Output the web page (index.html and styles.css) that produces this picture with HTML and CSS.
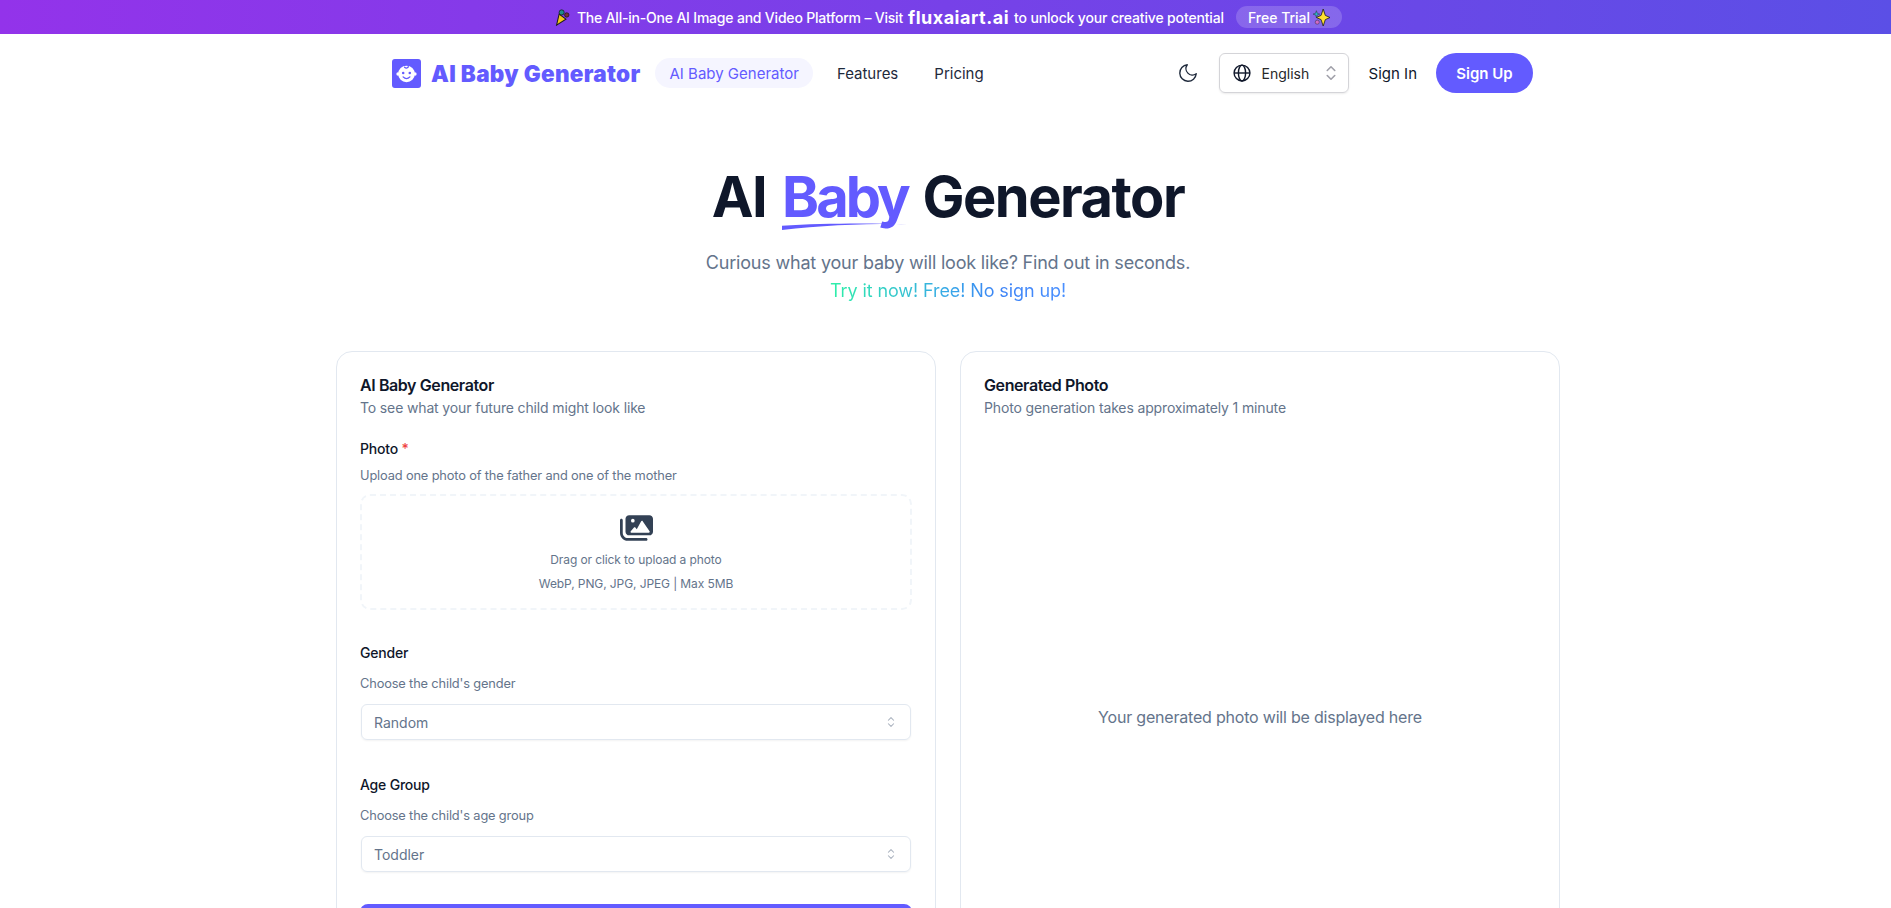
FILE: index.html
```html
<!DOCTYPE html>
<html lang="en">
<head>
<meta charset="utf-8">
<title>AI Baby Generator</title>
<link rel="stylesheet" href="styles.css">
</head>
<body>
<div class="banner">
  <svg class="party" viewBox="0 0 20 20" width="17" height="17"><path d="M6 6 L14 12 L3 19 Z" fill="#f5c518" stroke="#1a1a1a" stroke-width="1.2"/><circle cx="9" cy="4" r="3" fill="#1f8a8c" stroke="#111" stroke-width=".8"/><circle cx="15" cy="7" r="2.6" fill="#7a2f3a" stroke="#111" stroke-width=".8"/></svg>
  <span class="banner-a">The All-in-One AI Image and Video Platform – Visit</span>
  <a class="banner-link">fluxaiart.ai</a>
  <span class="banner-b">to unlock your creative potential</span>
  <span class="trial">Free Trial
    <svg viewBox="0 0 20 20" width="17" height="17"><path d="M12 0 L14.500 7.500 L20 10 L14.500 12.500 L12 20 L9.500 12.500 L4 10 L9.500 7.500 Z" fill="#ffe02e" stroke="#222" stroke-width="1"/><path d="M4 2 L5 5 L8 6 L5 7 L4 10 L3 7 L0 6 L3 5 Z" fill="#2cb6c8" stroke="#222" stroke-width=".5"/><circle cx="5" cy="15.500" r="2.400" fill="#d36bc6" stroke="#222" stroke-width=".5"/></svg>
  </span>
</div>

<header class="nav">
  <a class="logo">
    <svg class="logo-icon" viewBox="0 0 30 30" width="29" height="29">
      <rect width="30" height="30" rx="3" fill="#635bff"/>
      <circle cx="15" cy="15.500" r="8.600" fill="#fff"/>
      <circle cx="6.200" cy="15.500" r="1.700" fill="#fff"/><circle cx="23.800" cy="15.500" r="1.700" fill="#fff"/>
      <circle cx="11.600" cy="14.500" r="1.300" fill="#635bff"/><circle cx="18.400" cy="14.500" r="1.300" fill="#635bff"/>
      <path d="M11.500 18.500 Q15 22 18.500 18.500" fill="none" stroke="#635bff" stroke-width="1.400" stroke-linecap="round"/>
      <path d="M13 8.500 Q15 10.500 17 8" fill="none" stroke="#635bff" stroke-width="1.300" stroke-linecap="round"/>
    </svg>
    <span class="logo-text">AI Baby Generator</span>
  </a>
  <nav class="links">
    <a class="link active">AI Baby Generator</a>
    <a class="link">Features</a>
    <a class="link">Pricing</a>
  </nav>
  <div class="actions">
    <svg class="moon" viewBox="0 0 24 24" width="22" height="22"><path d="M21 12.800A9 9 0 1 1 11.200 3a7 7 0 0 0 9.800 9.800z" fill="none" stroke="#1e293b" stroke-width="1.500" stroke-linecap="round" stroke-linejoin="round"/></svg>
    <div class="lang">
      <svg viewBox="0 0 24 24" width="20" height="20" fill="none" stroke="#0f172a" stroke-width="1.700"><circle cx="12" cy="12" r="9.500"/><ellipse cx="12" cy="12" rx="4.300" ry="9.500"/><path d="M2.500 12h19"/></svg>
      <span class="lang-text">English</span>
      <svg class="updown" viewBox="0 0 16 16" width="20" height="20" fill="none" stroke="#a1a1aa" stroke-width="1.300" stroke-linecap="round" stroke-linejoin="round"><path d="M5 6l3-3 3 3M5 10l3 3 3-3"/></svg>
    </div>
    <a class="signin">Sign In</a>
    <a class="signup">Sign Up</a>
  </div>
</header>

<section class="hero">
  <h1 class="title">AI <span class="baby">Baby<svg class="swoosh" viewBox="0 0 126 9" preserveAspectRatio="none"><path d="M0 3.500 C40 0 90 0 126 1.500 C85 1 40 3 0 9 Z" fill="#635bff"/></svg></span> Generator</h1>
  <p class="sub">Curious what your baby will look like? Find out in seconds.</p>
  <p class="try"><span class="try-text">Try it now! Free! No sign up!</span></p>
</section>

<main class="cards">
  <section class="card">
    <h2 class="card-title">AI Baby Generator</h2>
    <p class="card-sub">To see what your future child might look like</p>

    <div class="label first">Photo <span class="req">*</span></div>
    <p class="help help-photo">Upload one photo of the father and one of the mother</p>
    <div class="drop">
      <svg class="drop-icon" viewBox="0 0 576 512" width="33" height="30"><path fill="#334155" d="M160 32c-35.300 0-64 28.700-64 64v224c0 35.300 28.700 64 64 64h352c35.300 0 64-28.700 64-64V96c0-35.300-28.700-64-64-64H160zm236 106.700l120 176c3.300 4.900 3.700 11.200.900 16.500S508 339 502 339H200c-6.200 0-11.800-3.500-14.400-9.100s-1.800-12.200 2.200-16.900l56-64c3-3.500 7.400-5.500 12-5.500s9 2 12 5.500l25 28.600 76.700-139.100c2.800-5 8.100-8.200 13.900-8.300s11.300 2.700 14.500 7.500zM192 128a32 32 0 1 1 64 0 32 32 0 1 1-64 0z"/><path fill="#334155" d="M48 120c0-13.300-10.700-24-24-24S0 106.700 0 120v224c0 75.100 60.900 136 136 136h320c13.300 0 24-10.700 24-24s-10.700-24-24-24H136c-48.600 0-88-39.400-88-88V120z"/></svg>
      <p class="drop-line">Drag or click to upload a photo</p>
      <p class="drop-line second">WebP, PNG, JPG, JPEG | Max 5MB</p>
    </div>

    <div class="label gender">Gender</div>
    <p class="help help-field">Choose the child's gender</p>
    <div class="select">
      <span>Random</span>
      <svg viewBox="0 0 16 16" width="14" height="14" fill="none" stroke="#a8b0bd" stroke-width="1.200" stroke-linecap="round" stroke-linejoin="round"><path d="M5 6l3-3 3 3M5 10l3 3 3-3"/></svg>
    </div>

    <div class="label age">Age Group</div>
    <p class="help help-field">Choose the child's age group</p>
    <div class="select">
      <span>Toddler</span>
      <svg viewBox="0 0 16 16" width="14" height="14" fill="none" stroke="#a8b0bd" stroke-width="1.200" stroke-linecap="round" stroke-linejoin="round"><path d="M5 6l3-3 3 3M5 10l3 3 3-3"/></svg>
    </div>

    <div class="generate"></div>
  </section>

  <section class="card result">
    <h2 class="card-title">Generated Photo</h2>
    <p class="card-sub">Photo generation takes approximately 1 minute</p>
    <div class="placeholder">Your generated photo will be displayed here</div>
  </section>
</main>
</body>
</html>
```
FILE: styles.css
```css
* { box-sizing: border-box; }
html, body { margin: 0; height: 908px; overflow: hidden; }
body { font-family: Inter, "Liberation Sans", sans-serif; background: #fff; color: #0f172a; }
p, h1, h2 { margin: 0; }

.banner { height: 34px; padding-left: 5px; display: flex; align-items: center; justify-content: center; gap: 5px; color: #fff; font-size: 14px; font-weight: 500; background: linear-gradient(90deg, #9333ea 0%, #5b4fe6 100%); }
.party { margin-right: 1px; }
.banner-a { letter-spacing: -.2px; }
.banner-b { letter-spacing: -.15px; }
.banner-link { font-size: 18px; font-weight: 700; letter-spacing: .5px; }
.trial { display: flex; align-items: center; gap: 3px; height: 22px; margin-left: 7px; padding: 0 12px; border-radius: 11px; background: rgba(255,255,255,.18); }

.nav { height: 78px; padding: 0 358px 0 392px; display: flex; align-items: center; }
.logo { display: flex; align-items: center; gap: 10px; }
.logo-icon { display: block; }
.logo-text { font-size: 22.500px; font-weight: 900; letter-spacing: .3px; color: #635bff; white-space: nowrap; }
.links { display: flex; align-items: center; gap: 8px; margin-left: 15px; }
.link { height: 30px; padding: 0 14px; display: flex; align-items: center; font-size: 15px; font-weight: 400; color: #1e293b; border-radius: 15px; white-space: nowrap; }
.link.active { margin-right: 2px; background: #f5f5ff; color: #635bff; }
.actions { margin-left: auto; display: flex; align-items: center; }
.moon { margin-right: 20px; }
.lang { width: 130px; height: 40px; padding: 0 7px 0 12px; display: flex; align-items: center; border: 1px solid #d4d4d8; border-radius: 6px; box-shadow: 0 1px 2px rgba(0,0,0,.08); }
.lang-text { margin-left: 10px; font-size: 14px; color: #27272a; }
.updown { margin-left: auto; }
.signin { margin-left: 20px; font-size: 15px; color: #0f172a; }
.signup { margin-left: 19px; width: 97px; height: 40px; display: flex; align-items: center; justify-content: center; border-radius: 20px; background: #635bff; color: #fff; font-size: 15px; font-weight: 600; }

.hero { padding-left: 5px; padding-top: 55px; text-align: center; }
.title { font-size: 56px; line-height: 60px; font-weight: 700; letter-spacing: -1.500px; color: #0f172a; }
.baby { position: relative; display: inline-block; margin: 0 3px 0 4px; letter-spacing: -3px; color: #635bff; }
.swoosh { position: absolute; left: 0; top: 56px; width: 125px; height: 7px; }
.sub { margin-top: 22px; font-size: 18px; line-height: 28px; letter-spacing: -.2px; color: #64748b; }
.try { font-size: 18px; line-height: 28px; letter-spacing: -.1px; }
.try-text { background: linear-gradient(90deg, #2ef0a8 0%, #38a8e8 50%, #3b82f6 72%, #4a90ff 100%); -webkit-background-clip: text; background-clip: text; color: transparent; }

.cards { margin: 46px 0 0 336px; width: 1224px; display: grid; grid-template-columns: 600px 600px; column-gap: 24px; align-items: start; }
.card { height: 900px; padding: 23px; border: 1px solid #e2e8f0; border-radius: 16px; background: #fff; }
.result { display: flex; flex-direction: column; }
.card-title { font-size: 16px; line-height: 20px; font-weight: 600; letter-spacing: -.4px; color: #0f172a; }
.card-sub { margin-top: 3px; font-size: 14px; line-height: 20px; letter-spacing: -.14px; color: #64748b; }
.label { font-size: 14px; line-height: 20px; font-weight: 500; letter-spacing: -.2px; color: #0f172a; }
.label.first { margin-top: 21px; }
.label.gender { margin-top: 33px; }
.label.age { margin-top: 35px; }
.req { color: #ef4444; }
.help { font-size: 12.800px; line-height: 16px; letter-spacing: -.14px; color: #64748b; }
.help-photo { margin-top: 9px; }
.help-field { margin-top: 13px; }
.drop { margin-top: 10px; height: 116px; border: 2px dashed #f1f5f9; border-radius: 10px; display: flex; flex-direction: column; align-items: center; padding-top: 17px; }
.drop-icon { display: block; }
.drop-line { margin-top: 9px; font-size: 12px; line-height: 16px; letter-spacing: -.1px; color: #64748b; }
.drop-line.second { margin-top: 8px; }
.select { margin: 12px 1px 0; height: 36px; padding: 0 12px; display: flex; align-items: center; justify-content: space-between; border: 1px solid #e2e8f0; border-radius: 6px; box-shadow: 0 1px 2px rgba(0,0,0,.05); font-size: 14px; color: #64748b; }
.generate { height: 40px; margin-top: 32px; border-radius: 8px; background: #635bff; }
.placeholder { height: 598px; display: flex; align-items: center; justify-content: center; font-size: 16px; letter-spacing: -.2px; color: #64748b; }
```
